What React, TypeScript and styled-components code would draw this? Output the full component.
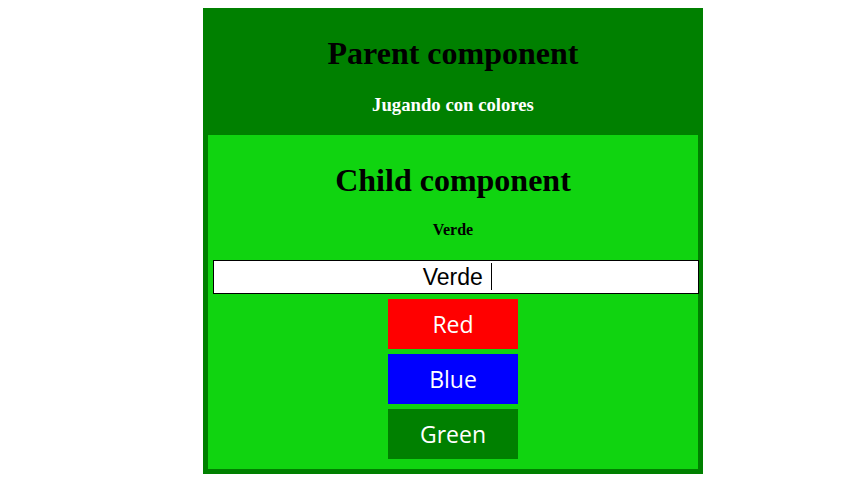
import * as React from "react";
import { useState } from "react";
import styled, { createGlobalStyle } from "styled-components";

const GlobalStyle = createGlobalStyle`
	body {
		margin: 8px;
		background: #fff;
		font-family: "Liberation Serif", "Times New Roman", serif;
	}
`;

const ParentBlock = styled.div`
	width: 500px;
	margin-left: 195px;
	padding-top: 6px;
	background-color: #008000;
	text-align: center;
	display: flow-root;

	h1 {
		font-size: 32px;
		margin: 21.44px 0;
	}

	h3 {
		color: #fff;
		font-size: 18.72px;
		margin: 18.72px 0 0;
	}
`;

const ChildBlock = styled.div`
	margin-top: 14px;
	padding: 6px 5px 10px;
	border: 5px solid #008000;
	background-color: #10d410;
	text-align: center;
	display: flow-root;

	h1 {
		font-size: 32px;
		margin: 21.44px 0;
	}

	h4 {
		font-size: 16px;
		margin: 21.28px 0;
	}
`;

const InputWrap = styled.div`
	position: relative;
	width: 486px;
`;

const ColorInput = styled.input`
	display: block;
	margin: 0;
	padding: 1px 2px;
	height: 34px;
	box-sizing: border-box;
	width: 486px;
	border: 1px solid #000;
	background: #fff;
	color: #000;
	font-family: "Liberation Sans", Arial, sans-serif;
	font-size: 23px;
	text-align: center;
	outline: none;
	caret-color: transparent;
`;

// the focused caret, drawn so that it shows in a still picture
const Caret = styled.span`
	position: absolute;
	left: calc(50% + 35px);
	top: 3px;
	width: 1px;
	height: 27px;
	background: #000;
	pointer-events: none;
`;

const ButtonStack = styled.div`
	display: flex;
	flex-direction: column;
	align-items: center;
	gap: 5px;
	margin-top: 5px;
`;

const ColorButton = styled.button<{ $bg: string }>`
	width: 130px;
	height: 50px;
	border: none;
	padding: 0;
	background-color: ${(props) => props.$bg};
	color: #fff;
	font-family: "Open Sans", "Noto Sans", sans-serif;
	font-size: 23px;
	cursor: pointer;
`;

const buttons = [
	{ label: "Red", color: "#ff0000", name: "Rojo" },
	{ label: "Blue", color: "#0000ff", name: "Azul" },
	{ label: "Green", color: "#008000", name: "Verde" },
];

const Child = (props: { colorName: string; onChange: (name: string) => void }) => {
	const { colorName, onChange } = props;
	return (
		<ChildBlock>
			<h1>Child component</h1>
			<h4>{colorName}</h4>
			<InputWrap>
				<ColorInput value={`${colorName} `} onChange={(ev) => onChange(ev.target.value.trim())} />
				<Caret />
			</InputWrap>
			<ButtonStack>
				{buttons.map((b) => (
					<ColorButton key={b.label} $bg={b.color} onClick={() => onChange(b.name)}>
						{b.label}
					</ColorButton>
				))}
			</ButtonStack>
		</ChildBlock>
	);
};

const App = () => {
	const [colorName, setColorName] = useState("Verde");

	return (
		<>
			<GlobalStyle />
			<ParentBlock>
				<h1>Parent component</h1>
				<h3>Jugando con colores</h3>
				<Child colorName={colorName} onChange={setColorName} />
			</ParentBlock>
		</>
	);
};

export default App;
